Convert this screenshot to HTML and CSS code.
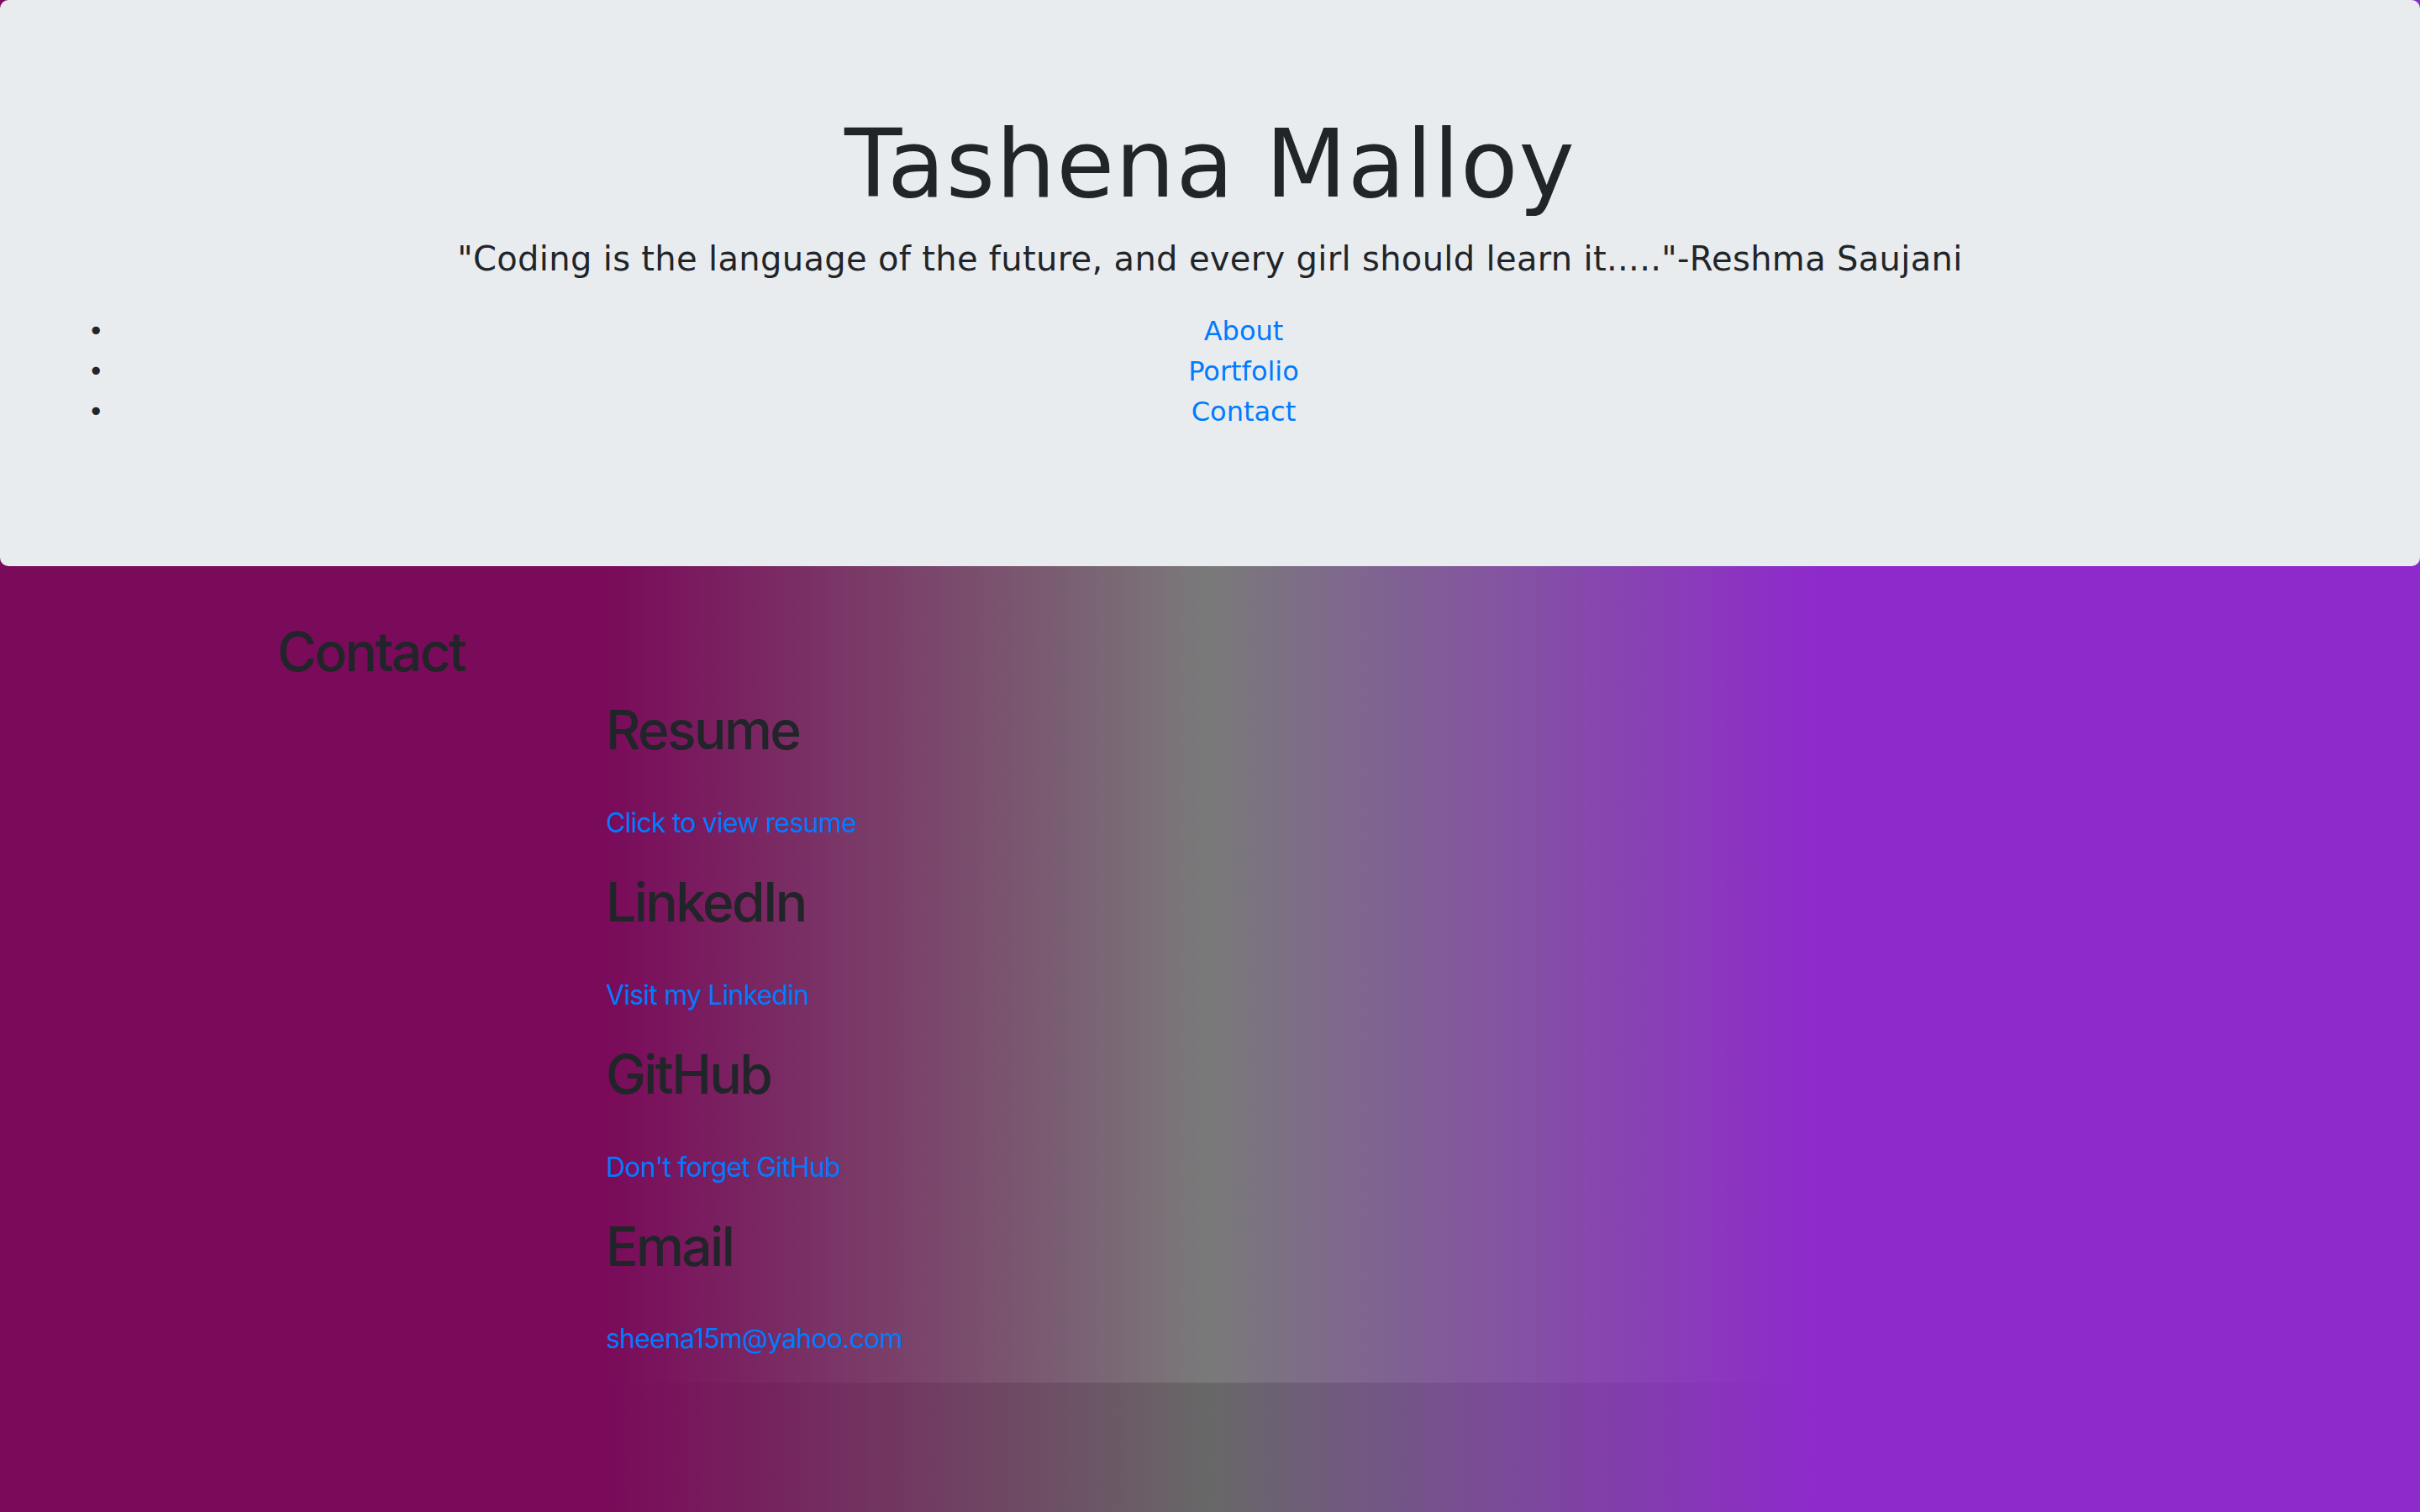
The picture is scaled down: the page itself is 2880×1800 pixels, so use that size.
FILE: index.html
```html
<!DOCTYPE html>
<html lang="en">
<head>
<meta charset="utf-8">
<title>Tashena Malloy</title>
<link rel="stylesheet" href="styles.css">
</head>
<body>
<div class="page">
  <div class="top">
    <header class="jumbotron">
      <h1 class="display">Tashena Malloy</h1>
      <p class="lead">"Coding is the language of the future, and every girl should learn it....."-Reshma Saujani</p>
      <ul class="nav-list">
        <li><a href="#about">About</a></li>
        <li><a href="#portfolio">Portfolio</a></li>
        <li><a href="#contact">Contact</a></li>
      </ul>
    </header>
    <main class="container">
      <h2 class="section-title">Contact</h2>
      <div class="contact-list">
        <div class="contact-item">
          <h2 class="item-title">Resume</h2>
          <p class="item-link"><a href="#">Click to view resume</a></p>
        </div>
        <div class="contact-item">
          <h2 class="item-title">LinkedIn</h2>
          <p class="item-link"><a href="#">Visit my Linkedin</a></p>
        </div>
        <div class="contact-item">
          <h2 class="item-title">GitHub</h2>
          <p class="item-link"><a href="#">Don't forget GitHub</a></p>
        </div>
        <div class="contact-item">
          <h2 class="item-title">Email</h2>
          <p class="item-link"><a href="#">sheena15m@yahoo.com</a></p>
        </div>
      </div>
    </main>
  </div>
</div>
</body>
</html>
```
FILE: styles.css
```css
html, body {
  margin: 0;
  padding: 0;
}

body {
  font-family: Inter, "Liberation Sans", sans-serif;
  font-size: 32px;
  line-height: 1.5;
  color: #212529;
}

a {
  color: #007bff;
  text-decoration: none;
}

.page {
  min-height: 1800px;
  background: linear-gradient(to right, #7a0a5a 25%, #686868 50%, #8e2acb 75%);
}

.top {
  display: flow-root;
  background: linear-gradient(to right, #7a0a5a 25%, #7a7a7a 50%, #8e2acb 75%);
}

.jumbotron {
  background: #e9ecef;
  border-radius: 10px;
  padding: 128px 64px;
  margin-bottom: 64px;
  text-align: center;
  font-family: Verdana, "DejaVu Sans", sans-serif;
}

.display {
  font-size: 112px;
  font-weight: 400;
  line-height: 1.2;
  letter-spacing: 0.01em;
  margin: 0 0 16px;
}

.lead {
  font-size: 40px;
  font-weight: 400;
  line-height: 1.5;
  letter-spacing: 0.33px;
  margin: 0 0 32px;
}

.nav-list {
  margin: 0 0 32px;
  padding-left: 80px;
  line-height: 48px;
}

.nav-list li::marker {
  content: "\2022\00a0\00a0";
  font-family: "DejaVu Sans", sans-serif;
  color: #212529;
}

.container {
  width: 2220px;
  margin: 0 auto;
}

.section-title,
.item-title {
  font-size: 64px;
  font-weight: 500;
  line-height: 1.2;
  letter-spacing: -0.04em;
  margin: 0 0 16px;
}

.contact-list {
  padding-left: 391px;
}

.item-link {
  margin: 48px 0 32px;
  line-height: 48px;
  letter-spacing: -0.025em;
}

.contact-item:last-child .item-link {
  margin-bottom: 28px;
}
```
